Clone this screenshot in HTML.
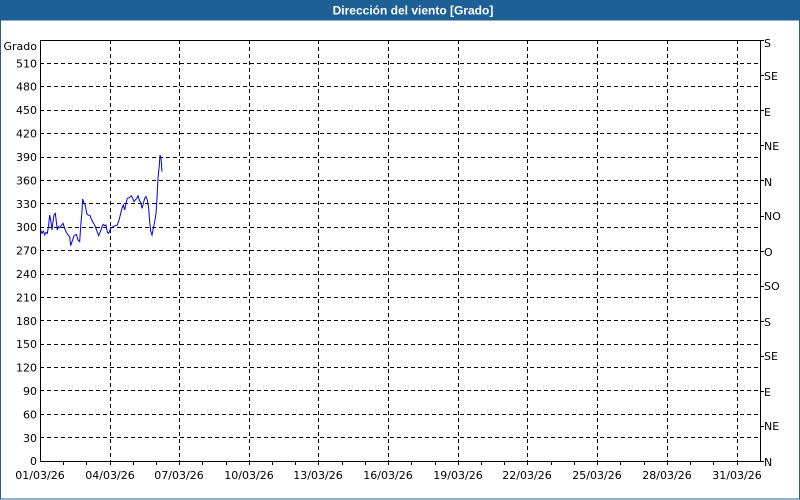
<!DOCTYPE html>
<html><head><meta charset="utf-8"><style>
html,body{margin:0;padding:0;background:#fff}
svg{display:block}
text{font-family:"DejaVu Sans","Liberation Sans",sans-serif;font-size:11px;fill:#000}
</style></head><body>
<svg width="800" height="500" viewBox="0 0 800 500" xmlns="http://www.w3.org/2000/svg">
<rect x="0" y="0" width="800" height="500" fill="#fff"/>
<rect x="0" y="0" width="800" height="20" fill="#1e5f96"/>
<rect x="0.5" y="20" width="799" height="479" fill="none" stroke="#1e5f96" stroke-width="1"/>
<text x="413" y="14.5" text-anchor="middle" style="fill:#fff;font-weight:bold;font-size:12px;font-family:'Liberation Sans',sans-serif">Dirección del viento [Grado]</text>
<g stroke="#000" stroke-width="1" stroke-dasharray="4,3" shape-rendering="crispEdges">
<line x1="40" x2="760" y1="63.5" y2="63.5"/><line x1="40" x2="760" y1="86.5" y2="86.5"/><line x1="40" x2="760" y1="110.5" y2="110.5"/><line x1="40" x2="760" y1="133.5" y2="133.5"/><line x1="40" x2="760" y1="157.5" y2="157.5"/><line x1="40" x2="760" y1="180.5" y2="180.5"/><line x1="40" x2="760" y1="203.5" y2="203.5"/><line x1="40" x2="760" y1="227.5" y2="227.5"/><line x1="40" x2="760" y1="250.5" y2="250.5"/><line x1="40" x2="760" y1="274.5" y2="274.5"/><line x1="40" x2="760" y1="297.5" y2="297.5"/><line x1="40" x2="760" y1="320.5" y2="320.5"/><line x1="40" x2="760" y1="344.5" y2="344.5"/><line x1="40" x2="760" y1="367.5" y2="367.5"/><line x1="40" x2="760" y1="390.5" y2="390.5"/><line x1="40" x2="760" y1="414.5" y2="414.5"/><line x1="40" x2="760" y1="437.5" y2="437.5"/>
<line y1="40" y2="461" x1="110.5" x2="110.5"/><line y1="40" y2="461" x1="179.5" x2="179.5"/><line y1="40" y2="461" x1="249.5" x2="249.5"/><line y1="40" y2="461" x1="318.5" x2="318.5"/><line y1="40" y2="461" x1="388.5" x2="388.5"/><line y1="40" y2="461" x1="458.5" x2="458.5"/><line y1="40" y2="461" x1="527.5" x2="527.5"/><line y1="40" y2="461" x1="597.5" x2="597.5"/><line y1="40" y2="461" x1="667.5" x2="667.5"/><line y1="40" y2="461" x1="737.5" x2="737.5"/>
</g>
<g stroke="#000" stroke-width="1" shape-rendering="crispEdges" fill="none">
<path d="M40.5 40.5H760.5V461.5H40.5Z"/>
<path d="M63.5 461v4M86.5 461v4M110.5 461v4M133.5 461v4M156.5 461v4M179.5 461v4M202.5 461v4M226.5 461v4M249.5 461v4M272.5 461v4M295.5 461v4M318.5 461v4M342.5 461v4M365.5 461v4M388.5 461v4M411.5 461v4M435.5 461v4M458.5 461v4M481.5 461v4M504.5 461v4M527.5 461v4M551.5 461v4M574.5 461v4M597.5 461v4M620.5 461v4M644.5 461v4M667.5 461v4M690.5 461v4M713.5 461v4M737.5 461v4"/>
<path d="M760 40.5h4M760 75.5h4M760 110.5h4M760 145.5h4M760 180.5h4M760 216.5h4M760 251.5h4M760 286.5h4M760 321.5h4M760 356.5h4M760 391.5h4M760 426.5h4M760 461.5h4"/>
</g>
<g text-anchor="end">
<text x="37" y="50">Grado</text>
<text x="37" y="67.5">510</text><text x="37" y="90.5">480</text><text x="37" y="114">450</text><text x="37" y="137.5">420</text><text x="37" y="161">390</text><text x="37" y="184.5">360</text><text x="37" y="208">330</text><text x="37" y="231">300</text><text x="37" y="254.5">270</text><text x="37" y="278">240</text><text x="37" y="301.5">210</text><text x="37" y="325">180</text><text x="37" y="348">150</text><text x="37" y="371.5">120</text><text x="37" y="395">90</text><text x="37" y="418.5">60</text><text x="37" y="442">30</text><text x="37" y="465">0</text>
</g>
<g>
<text x="764" y="47">S</text><text x="764" y="80">SE</text><text x="764" y="116">E</text><text x="764" y="150">NE</text><text x="764" y="186">N</text><text x="764" y="220">NO</text><text x="764" y="256">O</text><text x="764" y="290">SO</text><text x="764" y="326">S</text><text x="764" y="360">SE</text><text x="764" y="396">E</text><text x="764" y="430">NE</text><text x="764" y="466">N</text>
</g>
<g text-anchor="middle">
<text x="40" y="479">01/03/26</text><text x="110" y="479">04/03/26</text><text x="179" y="479">07/03/26</text><text x="249" y="479">10/03/26</text><text x="318" y="479">13/03/26</text><text x="388" y="479">16/03/26</text><text x="458" y="479">19/03/26</text><text x="527" y="479">22/03/26</text><text x="597" y="479">25/03/26</text><text x="667" y="479">28/03/26</text><text x="737" y="479">31/03/26</text>
</g>
<g transform="translate(38,145) scale(0.33333)">
<polyline fill="none" stroke="#0000e0" stroke-width="1" vector-effect="non-scaling-stroke" points="8,255 12,265 16,258 20,270 24,262 28,265 32,240 35,210 38,225 42,255 45,230 48,210 52,205 55,230 58,255 62,245 66,248 70,242 75,235 80,250 85,262 90,270 95,275 98,302 102,290 108,272 115,268 120,285 125,290 128,245 132,200 134,162 138,175 142,180 146,205 150,210 156,212 160,222 165,232 170,240 176,256 182,272 188,258 192,245 196,238 200,242 204,240 208,262 212,265 218,250 225,245 232,242 238,240 244,222 248,205 252,190 256,180 260,195 264,175 268,160 274,158 280,152 284,160 288,170 292,165 296,160 300,152 304,165 308,172 312,190 316,175 320,160 324,155 328,165 332,190 335,230 338,258 342,270 346,250 350,230 354,205 357,160 360,100 364,60 366,30 369,40 372,80"/>
</g>
</svg>
</body></html>
